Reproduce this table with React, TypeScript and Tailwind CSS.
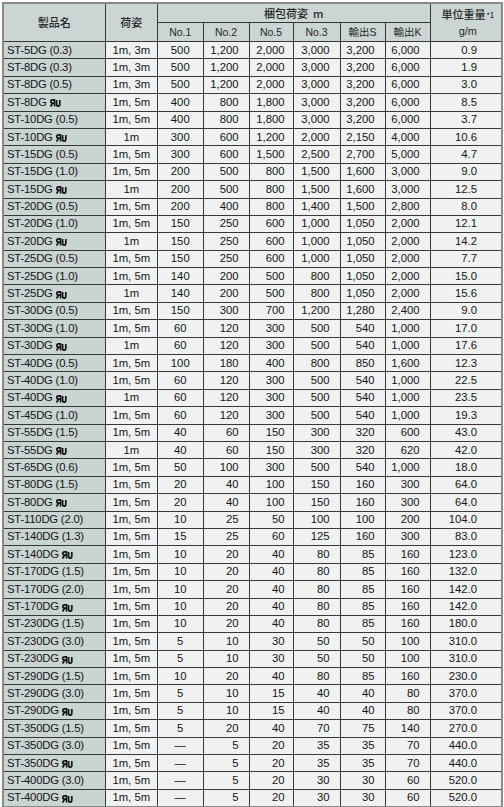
import React from "react";

type Row = [string, boolean, string, string, string, string, string, string, string, string];

const rows: Row[] = [
  ["ST-5DG (0.3)", false, "1m, 3m", "500", "1,200", "2,000", "3,000", "3,200", "6,000", "0.9"],
  ["ST-8DG (0.3)", false, "1m, 3m", "500", "1,200", "2,000", "3,000", "3,200", "6,000", "1.9"],
  ["ST-8DG (0.5)", false, "1m, 3m", "500", "1,200", "2,000", "3,000", "3,200", "6,000", "3.0"],
  ["ST-8DG", true, "1m, 5m", "400", "800", "1,800", "3,000", "3,200", "6,000", "8.5"],
  ["ST-10DG (0.5)", false, "1m, 5m", "400", "800", "1,800", "3,000", "3,200", "6,000", "3.7"],
  ["ST-10DG", true, "1m", "300", "600", "1,200", "2,000", "2,150", "4,000", "10.6"],
  ["ST-15DG (0.5)", false, "1m, 5m", "300", "600", "1,500", "2,500", "2,700", "5,000", "4.7"],
  ["ST-15DG (1.0)", false, "1m, 5m", "200", "500", "800", "1,500", "1,600", "3,000", "9.0"],
  ["ST-15DG", true, "1m", "200", "500", "800", "1,500", "1,600", "3,000", "12.5"],
  ["ST-20DG (0.5)", false, "1m, 5m", "200", "400", "800", "1,400", "1,500", "2,800", "8.0"],
  ["ST-20DG (1.0)", false, "1m, 5m", "150", "250", "600", "1,000", "1,050", "2,000", "12.1"],
  ["ST-20DG", true, "1m", "150", "250", "600", "1,000", "1,050", "2,000", "14.2"],
  ["ST-25DG (0.5)", false, "1m, 5m", "150", "250", "600", "1,000", "1,050", "2,000", "7.7"],
  ["ST-25DG (1.0)", false, "1m, 5m", "140", "200", "500", "800", "1,050", "2,000", "15.0"],
  ["ST-25DG", true, "1m", "140", "200", "500", "800", "1,050", "2,000", "15.6"],
  ["ST-30DG (0.5)", false, "1m, 5m", "150", "300", "700", "1,200", "1,280", "2,400", "9.0"],
  ["ST-30DG (1.0)", false, "1m, 5m", "60", "120", "300", "500", "540", "1,000", "17.0"],
  ["ST-30DG", true, "1m", "60", "120", "300", "500", "540", "1,000", "17.6"],
  ["ST-40DG (0.5)", false, "1m, 5m", "100", "180", "400", "800", "850", "1,600", "12.3"],
  ["ST-40DG (1.0)", false, "1m, 5m", "60", "120", "300", "500", "540", "1,000", "22.5"],
  ["ST-40DG", true, "1m", "60", "120", "300", "500", "540", "1,000", "23.5"],
  ["ST-45DG (1.0)", false, "1m, 5m", "60", "120", "300", "500", "540", "1,000", "19.3"],
  ["ST-55DG (1.5)", false, "1m, 5m", "40", "60", "150", "300", "320", "600", "43.0"],
  ["ST-55DG", true, "1m", "40", "60", "150", "300", "320", "620", "42.0"],
  ["ST-65DG (0.6)", false, "1m, 5m", "50", "100", "300", "500", "540", "1,000", "18.0"],
  ["ST-80DG (1.5)", false, "1m, 5m", "20", "40", "100", "150", "160", "300", "64.0"],
  ["ST-80DG", true, "1m, 5m", "20", "40", "100", "150", "160", "300", "64.0"],
  ["ST-110DG (2.0)", false, "1m, 5m", "10", "25", "50", "100", "100", "200", "104.0"],
  ["ST-140DG (1.3)", false, "1m, 5m", "15", "25", "60", "125", "160", "300", "83.0"],
  ["ST-140DG", true, "1m, 5m", "10", "20", "40", "80", "85", "160", "123.0"],
  ["ST-170DG (1.5)", false, "1m, 5m", "10", "20", "40", "80", "85", "160", "132.0"],
  ["ST-170DG (2.0)", false, "1m, 5m", "10", "20", "40", "80", "85", "160", "142.0"],
  ["ST-170DG", true, "1m, 5m", "10", "20", "40", "80", "85", "160", "142.0"],
  ["ST-230DG (1.5)", false, "1m, 5m", "10", "20", "40", "80", "85", "160", "180.0"],
  ["ST-230DG (3.0)", false, "1m, 5m", "5", "10", "30", "50", "50", "100", "310.0"],
  ["ST-230DG", true, "1m, 5m", "5", "10", "30", "50", "50", "100", "310.0"],
  ["ST-290DG (1.5)", false, "1m, 5m", "10", "20", "40", "80", "85", "160", "230.0"],
  ["ST-290DG (3.0)", false, "1m, 5m", "5", "10", "15", "40", "40", "80", "370.0"],
  ["ST-290DG", true, "1m, 5m", "5", "10", "15", "40", "40", "80", "370.0"],
  ["ST-350DG (1.5)", false, "1m, 5m", "5", "20", "40", "70", "75", "140", "270.0"],
  ["ST-350DG (3.0)", false, "1m, 5m", "—", "5", "20", "35", "35", "70", "440.0"],
  ["ST-350DG", true, "1m, 5m", "—", "5", "20", "35", "35", "70", "440.0"],
  ["ST-400DG (3.0)", false, "1m, 5m", "—", "5", "20", "30", "30", "60", "520.0"],
  ["ST-400DG", true, "1m, 5m", "—", "5", "20", "30", "30", "60", "520.0"],
];

function UlMark() {
  return (
    <svg width="11" height="8" viewBox="0 0 11 8" className="inline-block ml-[3px] -mb-[1px]" aria-hidden="true">
      <g fill="none" stroke="#151515" strokeWidth="1.7" strokeLinecap="butt" strokeLinejoin="round">
        <path d="M4.6 7.5 V0.9 H2.4 Q0.8 0.9 0.8 2.5 Q0.8 4.1 2.4 4.1 H4.6" />
        <path d="M2.6 4.1 L0.6 7.5" />
        <path d="M6.6 0.9 V5.2 Q6.6 7.2 8.2 7.2 Q9.8 7.2 9.8 5.2 V0.9" />
      </g>
    </svg>
  );
}

const JP = { fontFamily: '"Noto Sans CJK JP", sans-serif' };
const B = "border border-[#383838]";
const H = `${B} bg-[#cbd5d3] text-[#262626] font-normal`;
const D = `${B} bg-[#eff2f1] text-[#141414]`;

export default function App() {
  return (
    <div className="w-[504px] h-[807px] bg-white pt-[2px] pl-[2px]" style={{ fontFamily: '"Liberation Sans", "Noto Sans CJK JP", sans-serif' }}>
      <table className="table-fixed border-collapse border-2 border-[#8a8a8a] w-[499px] text-[11.3px] leading-none">
        <colgroup>
          <col className="w-[102px]" />
          <col className="w-[52.5px]" />
          <col className="w-[45.5px]" />
          <col className="w-[46px]" />
          <col className="w-[44px]" />
          <col className="w-[47px]" />
          <col className="w-[45px]" />
          <col className="w-[45px]" />
          <col className="w-[72px]" />
        </colgroup>
        <thead>
          <tr className="h-[19.5px]">
            <th rowSpan={2} className={`${H} text-[11px] text-center align-middle`} style={JP}>
              <span className="font-medium">製品名</span>
            </th>
            <th rowSpan={2} className={`${H} text-[11px] text-center align-middle`} style={JP}>
              <span className="font-medium">荷姿</span>
            </th>
            <th colSpan={6} className={`${H} text-[11px] text-center align-middle whitespace-pre`} style={JP}>
              <span className="font-medium">{"梱包荷姿  m"}</span>
            </th>
            <th rowSpan={2} className={`${H} text-[11px] text-center align-middle`}>
              <div className="flex flex-col items-center gap-[6px] pl-[4px]">
                <span className="font-medium" style={JP}>
                  単位重量<sup className="text-[7px] ml-[1px] relative -top-[1px]">*1</sup>
                </span>
                <span style={{ fontFamily: '"Liberation Sans", sans-serif' }}>g/m</span>
              </div>
            </th>
          </tr>
          <tr className="h-[19px]">
            {["No.1", "No.2", "No.5", "No.3", "輸出S", "輸出K"].map((t) => (
              <th key={t} className={`${H} text-[10.5px] text-center align-middle`} style={{ fontFamily: '"Liberation Sans", "Noto Sans CJK JP", sans-serif' }}>
                {t}
              </th>
            ))}
          </tr>
        </thead>
        <tbody>
          {rows.map((r, i) => (
            <tr key={i} className="h-[17.4px]">
              <td className={`${B} bg-[#c9d5d2] text-[#141414] text-left pl-[3px] whitespace-nowrap tracking-[-0.2px]`}>
                {r[0]}
                {r[1] && <UlMark />}
              </td>
              <td className={`${D} text-center whitespace-nowrap`}>{r[2]}</td>
              <td className={`${D} text-center`}>{r[3]}</td>
              <td className={`${D} text-right pr-[10px]`}>{r[4]}</td>
              <td className={`${D} text-right pr-[8px]`}>{r[5]}</td>
              <td className={`${D} text-right pr-[10px]`}>{r[6]}</td>
              <td className={`${D} text-right pr-[10px]`}>{r[7]}</td>
              <td className={`${D} text-right pr-[10px]`}>{r[8]}</td>
              <td className={`${D} text-right pr-[24px]`}>{r[9]}</td>
            </tr>
          ))}
        </tbody>
      </table>
    </div>
  );
}
